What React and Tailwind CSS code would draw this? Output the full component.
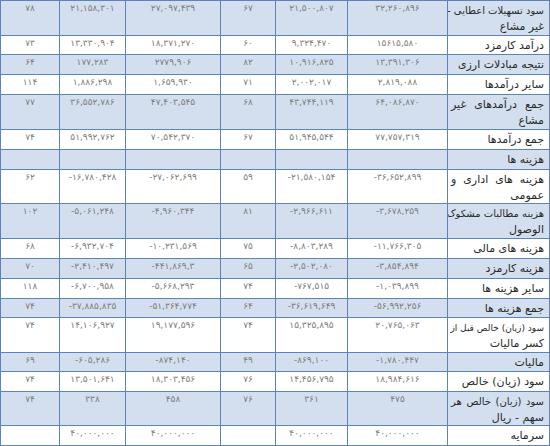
import React from "react";

const rows = [
  { h: "h-[35px]", fs: "text-[10px]", label: ["سود تسهیلات اعطایی -", "غیر مشاع"], v: ["۷۸", "۲۱,۱۵۸,۳۰۱", "۲۷,۰۹۷,۴۳۹", "۶۷", "۲۱,۵۰۰,۸۰۷", "۳۲,۲۶۰,۸۹۶"] },
  { h: "h-[19px]", label: ["درآمد کارمزد"], v: ["۷۳", "۱۳,۳۳۰,۹۰۴", "۱۸,۳۷۱,۲۷۰", "۶۰", "۹,۳۲۴,۴۷۰", "۱۵۶۱۵,۵۸۰"] },
  { h: "h-[20px]", label: ["نتیجه مبادلات ارزی"], v: ["۶۴", "۱۷۷,۲۸۳", "۲۷۷۹,۹۰۶", "۸۲", "۱۰,۹۱۶,۸۲۵", "۱۳,۳۹۱,۳۰۶"] },
  { h: "h-[20px]", label: ["سایر درآمدها"], v: ["۱۱۴", "۱,۸۸۶,۲۹۸", "۱,۶۵۹,۹۳۰", "۷۱", "۲,۰۰۲,۰۱۷", "۲,۸۱۹,۰۸۸"] },
  { h: "h-[35px]", label: ["جمع درآمدهای غیر", "مشاع"], v: ["۷۷", "۳۶,۵۵۲,۷۸۶", "۴۷,۴۰۳,۵۴۵", "۶۸", "۴۳,۷۴۴,۱۱۹", "۶۴,۰۸۶,۸۷۰"] },
  { h: "h-[20px]", label: ["جمع درآمدها"], v: ["۷۴", "۵۱,۹۹۲,۷۶۲", "۷۰,۵۴۲,۳۷۰", "۶۷", "۵۱,۹۴۵,۵۴۴", "۷۷,۷۵۷,۳۱۹"] },
  { h: "h-[20px]", label: ["هزینه ها"], v: ["", "", "", "", "", ""] },
  { h: "h-[34px]", label: ["هزینه های اداری و", "عمومی"], v: ["۶۲", "-۱۶,۷۸۰,۴۲۸", "-۲۷,۰۶۲,۶۹۹", "۵۹", "-۲۱,۵۸۰,۱۵۴", "-۳۶,۶۵۲,۸۹۹"] },
  { h: "h-[35px]", fs: "text-[10px]", label: ["هزینه مطالبات مشکوک", "الوصول"], v: ["۱۰۲", "-۵,۰۶۱,۲۴۸", "-۴,۹۶۰,۳۴۴", "۸۱", "-۲,۹۶۶,۶۱۱", "-۳,۶۷۸,۲۵۹"] },
  { h: "h-[20px]", label: ["هزینه های مالی"], v: ["۶۸", "-۶,۹۳۲,۷۰۴", "-۱۰,۲۳۱,۵۶۹", "۷۵", "-۸,۸۰۳,۲۸۹", "-۱۱,۷۶۶,۳۰۵"] },
  { h: "h-[20px]", label: ["هزینه کارمزد"], v: ["۷۰", "-۲,۴۱۰,۴۹۷", "-۴۴۱,۸۶۹,۳", "۶۵", "-۲,۵۰۲,۰۸۰", "-۳,۸۵۴,۸۹۴"] },
  { h: "h-[20px]", label: ["سایر هزینه ها"], v: ["۱۱۸", "-۶,۷۰۰,۹۵۸", "-۵,۶۶۸,۲۹۳", "۷۴", "-۷۶۷,۵۱۵", "-۱,۰۳۹,۸۹۹"] },
  { h: "h-[19px]", label: ["جمع هزینه ها"], v: ["۷۴", "-۳۷,۸۸۵,۸۳۵", "-۵۱,۳۶۴,۷۷۴", "۶۴", "-۳۶,۶۱۹,۶۴۹", "-۵۶,۹۹۲,۲۵۶"] },
  { h: "h-[35px]", fs: "text-[9px]", label: ["سود (زیان) خالص قبل از", "کسر مالیات"], v: ["۷۴", "۱۴,۱۰۶,۹۲۷", "۱۹,۱۷۷,۵۹۶", "۷۴", "۱۵,۳۲۵,۸۹۵", "۲۰,۷۶۵,۰۶۳"] },
  { h: "h-[19px]", label: ["مالیات"], v: ["۶۹", "-۶۰۵,۲۸۶", "-۸۷۴,۱۴۰", "۴۹", "-۸۶۹,۱۰۰", "-۱,۷۸۰,۴۴۷"] },
  { h: "h-[20px]", label: ["سود (زیان) خالص"], v: ["۷۴", "۱۳,۵۰۱,۶۴۱", "۱۸,۳۰۳,۴۵۶", "۷۶", "۱۴,۴۵۶,۷۹۵", "۱۸,۹۸۴,۶۱۶"] },
  { h: "h-[34px]", fs: "text-[10px]", label: ["سود (زیان) خالص هر", "سهم - ریال"], v: ["۷۴", "۳۳۸", "۴۵۸", "۷۶", "۳۶۱", "۴۷۵"] },
  { h: "h-[20px]", label: ["سرمایه"], v: ["", "۴۰,۰۰۰,۰۰۰", "۴۰,۰۰۰,۰۰۰", "", "۴۰,۰۰۰,۰۰۰", "۴۰,۰۰۰,۰۰۰"] },
];

function NumCell({ band, h, children }) {
  return (
    <div
      dir="ltr"
      className={`${band} ${h} border-r border-b border-[#5b84b8] text-center text-[9px] leading-[12px] pt-px text-[#7d7d7d] overflow-hidden whitespace-nowrap`}
    >
      {children}
    </div>
  );
}

function LabelCell({ band, h, lines, fs }) {
  return (
    <div
      dir="rtl"
      className={`${band} ${h} border-r border-b border-[#5b84b8] text-right text-[11px] leading-[16px] pt-[2px] pr-[5px] pl-[3px] text-[#2a2a2a] overflow-hidden`}
    >
      {lines.map((t, k) => (
        <div
          key={k}
          className={
            lines.length > 1 && k === 0
              ? `whitespace-nowrap [text-align-last:justify] ${fs || ""}`
              : "whitespace-nowrap"
          }
        >
          {t}
        </div>
      ))}
    </div>
  );
}

export default function App() {
  return (
    <div className="w-[550px] h-[446px] bg-white font-['DejaVu_Sans',sans-serif]">
      <div className="grid grid-cols-[59px_66px_95px_55px_72px_100px_102px] border-l border-t border-[#5b84b8] w-[550px]">
        {rows.map((r, i) => {
          const band = i % 2 === 0 ? "bg-[#d3dfee]" : "bg-white";
          return (
            <React.Fragment key={i}>
              {r.v.map((val, j) => (
                <NumCell key={j} band={band} h={r.h}>
                  {val}
                </NumCell>
              ))}
              <LabelCell band={band} h={r.h} lines={r.label} fs={r.fs} />
            </React.Fragment>
          );
        })}
      </div>
    </div>
  );
}
